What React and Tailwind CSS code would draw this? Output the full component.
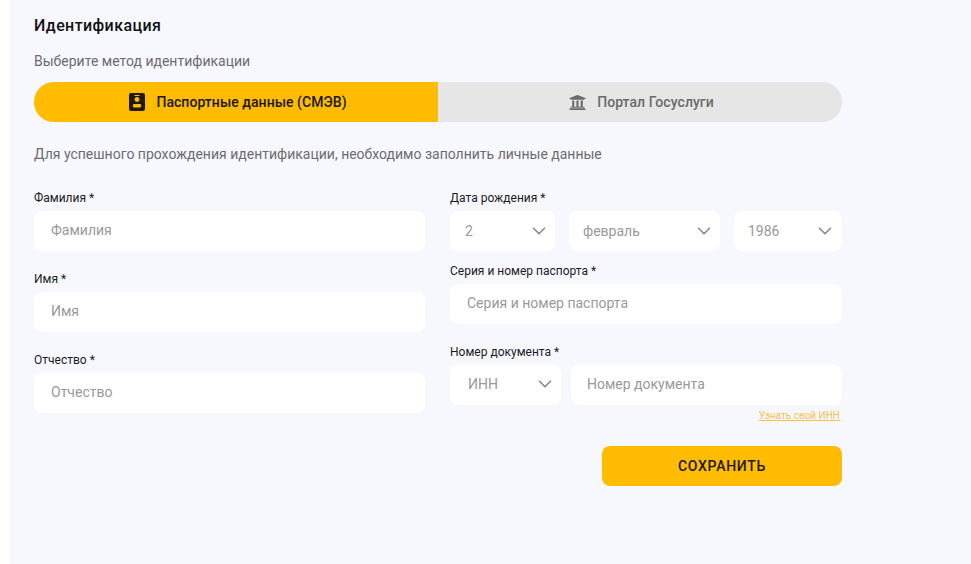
import React from "react";
import { ChevronDown } from "lucide-react";
import { FaUniversity } from "react-icons/fa";

const PassportIcon = () => (
  <svg width="16" height="18" viewBox="0 0 16 18" className="shrink-0">
    <rect x="0" y="0" width="16" height="18" rx="2" fill="#1f1a0c" />
    <circle cx="8" cy="6.5" r="2.4" fill="#ffbc00" />
    <rect x="4" y="11" width="8" height="3.5" rx="1" fill="#ffbc00" />
    <rect x="5.5" y="2" width="5" height="1" fill="#ffbc00" />
  </svg>
);

const Label = ({ children }) => (
  <label className="block text-xs leading-[14px] text-[#1b1b1f] mb-[6px]">{children}</label>
);

const TextInput = ({ placeholder, className = "" }) => (
  <input
    type="text"
    placeholder={placeholder}
    className={`h-10 w-full rounded-lg bg-white pb-[2px] text-sm outline-none placeholder:text-[#9a9a9a] ${className}`}
  />
);

const FakeSelect = ({ value, className = "" }) => (
  <div className={`flex h-10 items-center justify-between rounded-lg bg-white text-sm text-[#9a9a9a] ${className}`}>
    <span>{value}</span>
    <ChevronDown size={22} strokeWidth={1.8} className="text-[#8a8a8a]" />
  </div>
);

const Field = ({ label, children, className = "" }) => (
  <div className={className}>
    <Label>{label}</Label>
    {children}
  </div>
);

export default function App() {
  return (
    <div className="h-[564px] w-[971px] overflow-hidden bg-white font-['Roboto',sans-serif]">
      <div className="ml-[10px] h-full bg-[#f7f8fe] pl-6 pt-4">
        <div className="w-[808px]">
          <h2 className="text-base font-medium leading-[19px] tracking-[0.4px] text-[#111114]">Идентификация</h2>
          <p className="mt-[18px] text-sm leading-[16px] text-[#6c6c70]">Выберите метод идентификации</p>

          <div className="mt-[13px] flex h-10 overflow-hidden rounded-[20px] bg-[#e6e6e6] text-sm font-medium tracking-[0.05px]">
            <div className="flex w-[404px] items-center justify-center gap-[11px] bg-[#ffbc00] pl-[4px] text-[#1b1708]">
              <PassportIcon />
              <span>Паспортные данные (СМЭВ)</span>
            </div>
            <div className="flex flex-1 items-center justify-center gap-[11px] pl-[3px] text-[#6b6b6b]">
              <FaUniversity size={17} />
              <span>Портал Госуслуги</span>
            </div>
          </div>

          <p className="mt-6 text-sm leading-[16px] text-[#6c6c70]">
            Для успешного прохождения идентификации, необходимо заполнить личные данные
          </p>

          <div className="mt-[29px] flex gap-[25px]">
            <div className="flex w-[391px] flex-col gap-[21px]">
              <Field label="Фамилия *"><TextInput placeholder="Фамилия" className="px-[17px]" /></Field>
              <Field label="Имя *"><TextInput placeholder="Имя" className="px-[17px]" /></Field>
              <Field label="Отчество *"><TextInput placeholder="Отчество" className="px-[17px]" /></Field>
            </div>

            <div className="w-[392px]">
              <Field label="Дата рождения *">
                <div className="flex gap-[14px]">
                  <FakeSelect value="2" className="w-[105px] pl-[15px] pr-[5px]" />
                  <FakeSelect value="февраль" className="w-[151px] pl-[14px] pr-[5px]" />
                  <FakeSelect value="1986" className="w-[108px] pl-[14px] pr-[6px]" />
                </div>
              </Field>
              <Field label="Серия и номер паспорта *" className="mt-[13px]">
                <TextInput placeholder="Серия и номер паспорта" className="px-[17px]" />
              </Field>
              <Field label="Номер документа *" className="mt-[21px]">
                <div className="flex gap-[10px]">
                  <FakeSelect value="ИНН" className="w-[111px] shrink-0 pb-[2px] pl-[18px] pr-[5px]" />
                  <TextInput placeholder="Номер документа" className="px-4" />
                </div>
              </Field>
              <div className="mt-[3px] pr-[2px] text-right leading-[12px]">
                <a href="#" className="text-[10px] text-[#f8c04a] underline">Узнать свой ИНН</a>
              </div>
              <div className="mt-[24px] flex justify-end">
                <button className="h-10 w-[240px] rounded-lg bg-[#ffbc00] text-sm font-medium tracking-[0.05em] text-[#1b1708]">
                  СОХРАНИТЬ
                </button>
              </div>
            </div>
          </div>
        </div>
      </div>
    </div>
  );
}
